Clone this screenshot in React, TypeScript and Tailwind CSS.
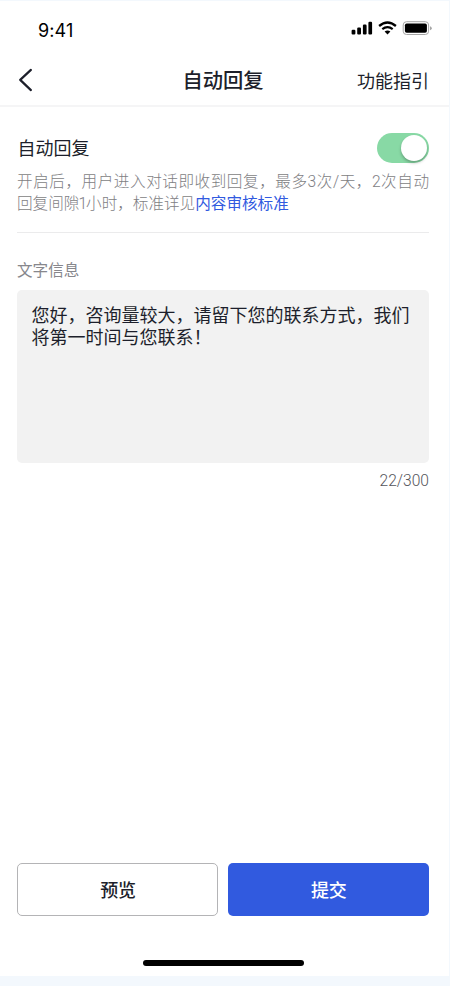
import React, { useState } from 'react';

const StatusBar = () => (
  <div className="flex h-[54px] items-start justify-between pl-[38px] pr-[17px]">
    <span className="mt-[19px] font-['Inter',sans-serif] text-[18px] leading-[22px] tracking-[0.1px] text-black">9:41</span>
    <svg className="mt-[17px]" width="82" height="20" viewBox="350 18 82 20" fill="none">
      <g fill="#000">
        <rect x="351.6" y="29.8" width="3.8" height="4.8" rx="1.1" />
        <rect x="357.2" y="27.6" width="3.8" height="7" rx="1.1" />
        <rect x="362.9" y="24.6" width="3.7" height="10" rx="1.1" />
        <rect x="368.4" y="21.8" width="3.7" height="12.8" rx="1.1" />
        <path d="M387.5 34.4 L384.6 31.5 Q387.5 29.3 390.4 31.5 Z" />
      </g>
      <path d="M382.3 29.2 Q387.5 25.1 392.7 29.2" stroke="#000" strokeWidth="2.2" />
      <path d="M379.1 26 Q387.5 18.9 395.9 26" stroke="#000" strokeWidth="2.3" />
      <rect x="403.2" y="21.7" width="25.4" height="12.8" rx="3.3" stroke="#a6a6a6" />
      <rect x="404.9" y="23.4" width="22" height="9.4" rx="1.8" fill="#000" />
      <path d="M430 26.2 Q431.8 26.8 431.8 28.2 Q431.8 29.6 430 30.2 Z" fill="#a6a6a6" />
    </svg>
  </div>
);

const Header = () => (
  <header className="grid h-[52px] grid-cols-3 items-center border-b-2 border-[#f5f5f6] pl-[17px] pr-5">
    <button aria-label="返回" className="w-fit">
      <svg width="18" height="24" viewBox="0 0 18 24" fill="none">
        <path d="M13.9 1.9 L3.2 11.9 L13.9 22.1" stroke="#1d1f2b" strokeWidth="2.2" strokeLinecap="round" strokeLinejoin="round" />
      </svg>
    </button>
    <h1 className="whitespace-nowrap pt-px text-center text-[20.3px] font-medium leading-6">自动回复</h1>
    <button className="whitespace-nowrap pt-[3px] text-right text-[18px] leading-6">功能指引</button>
  </header>
);

export default function App() {
  const [enabled, setEnabled] = useState(true);
  const [message, setMessage] = useState('您好，咨询量较大，请留下您的联系方式，我们将第一时间与您联系！');

  return (
    <div className="h-[986px] w-[450px] bg-[#f3f8fd] pr-px pt-px font-['Inter','Noto_Sans_CJK_SC',sans-serif] text-[#1d1f2b]">
      <div className="flex h-[975px] flex-col bg-white">
        <StatusBar />
        <Header />
        <main className="flex flex-1 flex-col pl-[17px] pr-5">
          <section className="h-[126px] border-b border-[#ebebec] pt-[25px]">
            <div className="flex h-[31px] items-center justify-between">
              <h2 className="pl-[0.5px] pt-[3px] text-[18px] leading-6">自动回复</h2>
              <button
                role="switch"
                aria-checked={enabled}
                aria-label="自动回复"
                onClick={() => setEnabled(!enabled)}
                className={`flex h-[30px] w-[52px] items-center rounded-full px-[2px] ${enabled ? 'justify-end bg-[#88d9a5]' : 'justify-start bg-gray-300'}`}
              >
                <span className="size-[26px] rounded-full bg-white shadow-[0_2px_3px_rgba(0,0,0,0.25)]" />
              </button>
            </div>
            <p className="mt-[9px] whitespace-nowrap font-['Roboto','Noto_Sans_CJK_SC',sans-serif] text-[15.6px] font-light leading-[21.5px] text-[#7e7e83]">
              <span className="block [text-align-last:justify]">开启后，用户进入对话即收到回复，最多3次/天，2次自动</span>
              <span className="block">
                回复间隙<span className="-ml-px tracking-[-1px]">1</span>小时，标准详见<a className="font-normal text-[#315adf]">内容审核标准</a>
              </span>
            </p>
          </section>

          <section className="pt-[26px]">
            <label htmlFor="message" className="block pt-px text-[15.6px] leading-[22px] text-[#87878c]">文字信息</label>
            <textarea
              id="message"
              value={message}
              maxLength={300}
              onChange={(e) => setMessage(e.target.value)}
              className="mt-2 block h-[173px] w-full resize-none rounded-[5px] bg-[#f2f2f2] pl-[14.5px] pr-3 pt-[15px] text-[18px] leading-[22px] outline-none"
            />
            <p className="mt-2 text-right font-['Roboto',sans-serif] text-[15.6px] font-light leading-5 text-[#55555b]">22/300</p>
          </section>

          <div className="mb-[43.5px] mt-auto grid grid-cols-2 gap-[9.5px]">
            <button className="h-[53px] rounded-[5px] border border-[#b4b4b6] pl-px pt-0.5 text-[18px] font-medium">预览</button>
            <button className="h-[53px] rounded-[5px] bg-[#315adf] pl-px pt-0.5 text-[18px] font-medium text-white">提交</button>
          </div>
        </main>
        <div className="mb-[10.5px] ml-[143px] h-[6px] w-[161px] rounded-full bg-black" />
      </div>
    </div>
  );
}
